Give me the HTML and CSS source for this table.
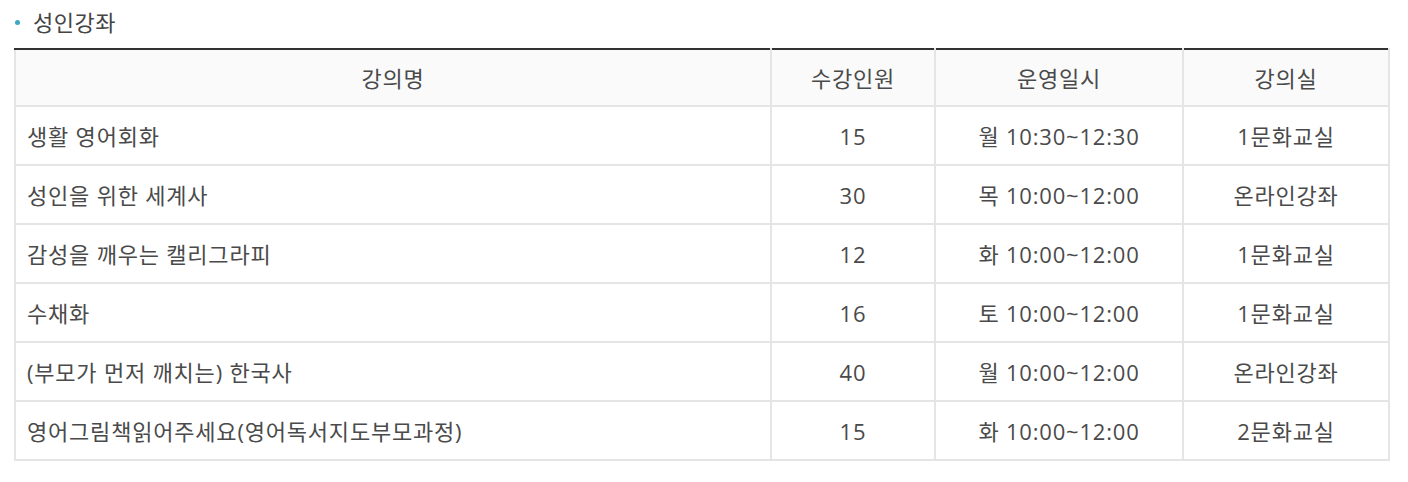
FILE: index.html
```html
<!DOCTYPE html>
<html lang="ko">
<head>
<meta charset="utf-8">
<link rel="stylesheet" href="styles.css">
</head>
<body>
<div class="wrap">
  <h3 class="title"><span class="dot"></span>성인강좌</h3>
  <table class="tbl">
    <colgroup>
      <col class="c1"><col class="c2"><col class="c3"><col class="c4">
    </colgroup>
    <thead>
      <tr><th>강의명</th><th>수강인원</th><th>운영일시</th><th>강의실</th></tr>
    </thead>
    <tbody>
      <tr><td class="l">생활 영어회화</td><td>15</td><td>월 10:30~12:30</td><td>1문화교실</td></tr>
      <tr><td class="l">성인을 위한 세계사</td><td>30</td><td>목 10:00~12:00</td><td>온라인강좌</td></tr>
      <tr><td class="l">감성을 깨우는 캘리그라피</td><td>12</td><td>화 10:00~12:00</td><td>1문화교실</td></tr>
      <tr><td class="l">수채화</td><td>16</td><td>토 10:00~12:00</td><td>1문화교실</td></tr>
      <tr><td class="l">(부모가 먼저 깨치는) 한국사</td><td>40</td><td>월 10:00~12:00</td><td>온라인강좌</td></tr>
      <tr><td class="l">영어그림책읽어주세요(영어독서지도부모과정)</td><td>15</td><td>화 10:00~12:00</td><td>2문화교실</td></tr>
    </tbody>
  </table>
</div>
</body>
</html>
```
FILE: styles.css
```css
html, body { margin: 0; padding: 0; background: #fff; }
body {
  font-family: "Open Sans", "Noto Sans CJK KR", sans-serif;
  color: #444;
}
.wrap { padding: 0 18px 0 14px; }
.title {
  margin: 0;
  height: 48px;
  display: flex;
  align-items: flex-start;
  gap: 13px;
  padding-top: 4px;
  box-sizing: border-box;
  font-family: "Noto Sans CJK KR", sans-serif;
  font-size: 22px;
  letter-spacing: 0.5px;
  font-weight: 400;
  line-height: 34px;
  color: #444;
}
.dot {
  width: 5px; height: 5px;
  border-radius: 50%;
  background: #3ba7c2;
  margin-top: 16px;
  margin-left: 1px;
}
.tbl {
  width: 1376px;
  border-collapse: collapse;
  table-layout: fixed;
}
.c1 { width: 756px; }
.c2 { width: 164px; }
.c3 { width: 248px; }
.c4 { width: 206px; }
.tbl th, .tbl td {
  border: 2px solid #e5e5e5;
  text-align: center;
  font-size: 22px;
  letter-spacing: 0.8px;
  font-weight: 400;
  color: #4a4a4a;
  padding: 0 11px;
  line-height: 30px;
}
.tbl thead tr th { border-top: 2px solid #333; }
.tbl th { background: #fafafa; height: 55px; }
.tbl td { height: 57px; }
.tbl td.l { text-align: left; }
```
